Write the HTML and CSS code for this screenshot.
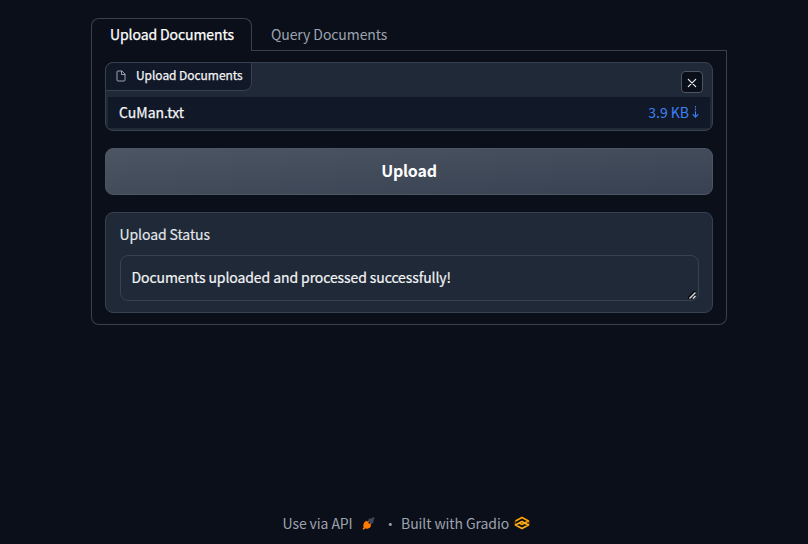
FILE: index.html
```html
<!DOCTYPE html>
<html lang="en">
<head>
<meta charset="utf-8">
<title>Upload Documents</title>
<link rel="stylesheet" href="styles.css">
</head>
<body>
<main class="app">
  <nav class="tabs">
    <button class="tab tab-active">Upload Documents</button>
    <button class="tab">Query Documents</button>
  </nav>
  <section class="panel">
    <div class="file-block">
      <div class="block-label">
        <svg class="file-icon" viewBox="0 0 24 24" fill="none" stroke="currentColor" stroke-width="2" stroke-linecap="round" stroke-linejoin="round"><path d="M13 2H6a2 2 0 0 0-2 2v16a2 2 0 0 0 2 2h12a2 2 0 0 0 2-2V9z"/><path d="M13 2v7h7"/></svg>
        <span>Upload Documents</span>
      </div>
      <button class="clear" aria-label="Clear"><svg viewBox="0 0 10 10" stroke="currentColor" stroke-width="1.15" stroke-linecap="round"><path d="M1.3 1.3l7.4 7.4M8.7 1.3l-7.4 7.4"/></svg></button>
      <div class="file-row">
        <span class="file-name">CuMan.txt</span>
        <a class="file-size">3.9 KB<svg class="down" viewBox="0 0 7 12" fill="none" stroke="currentColor"><path d="M3.5 0v1.6M3.5 2.6v1.6M3.5 5.2v5.8" stroke-width="1.1"/><path d="M.7 8.2l2.8 2.9 2.8-2.9" stroke-width="1.1"/></svg></a>
      </div>
    </div>
    <button class="upload">Upload</button>
    <div class="status">
      <label class="status-label" for="status">Upload Status</label>
      <div class="output" id="status">Documents uploaded and processed successfully!
        <svg class="grip" viewBox="0 0 8 8"><path d="M0 6L6 0h2v3L3 8H0z" fill="#05070b"/><path d="M1.5 7.5l6-6M5 7.5L7.5 5" stroke="#d5d5d5" stroke-width="1.5"/></svg>
      </div>
    </div>
  </section>
</main>
<footer class="footer">
  <span class="api">Use via API</span>
  <svg class="rocket" viewBox="0 0 14 14"><path d="M6.2 3.5L8.3 1.6l2.3-.3L12.4 0l1.4 1.2-1.3 1.7-.1 2.6-2.2 2.3z" fill="#3f4859"/><path d="M.5 13l1.2-1.6-.4-2.5L2.4 6l2.2-2 1.2.9.9-.6.8.8-.8 1 1.4 1.3 1-.8.8.8-.8.9.8.9-1.4 2.3-2.6 1.2-2.5-.2-1.6 1.2z" fill="#ff7c00"/></svg>
  <span class="dot">·</span>
  <span class="built">Built with Gradio</span>
  <svg class="gradio" viewBox="0 0 16 14" fill="none" stroke-linejoin="round"><path d="M1.5 4.9L8 1.4l6.5 3.5L8 8.4 5 6.8" stroke="#ffa000" stroke-width="1.7"/><path d="M11 7.2L8 5.6 1.5 9.1 8 12.6l6.5-3.5z" stroke="#ffb01a" stroke-width="1.7"/><path d="M1.2 5v4M14.8 5v4" stroke="#ff8c00" stroke-width=".6"/></svg>
</footer>
</body>
</html>
```
FILE: styles.css
```css
* { box-sizing: border-box; }
body {
  margin: 0;
  height: 544px;
  display: flex;
  flex-direction: column;
  justify-content: space-between;
  background: #0b0f19;
  color: #f3f4f6;
  font: 14px/20px "Noto Sans CJK SC", "Noto Sans", sans-serif;
  letter-spacing: -0.09px;
  overflow: hidden;
}
button { font: inherit; letter-spacing: inherit; color: inherit; padding: 0; margin: 0; }
svg { display: block; flex: none; }
.app { width: 636px; margin: 18px 0 0 91px; }
.tabs { display: flex; height: 33px; border-bottom: 1px solid #374151; }
.tab {
  height: 33px;
  padding: 0 18px 2px;
  border: 1px solid transparent;
  border-bottom: 0;
  background: none;
  color: #9ca3af;
  white-space: nowrap;
}
.tab-active {
  width: 161px;
  border-color: #374151;
  border-radius: 8px 8px 0 0;
  background: #0b0f19;
  color: #fff;
  text-align: left;
  -webkit-text-stroke: 0.25px;
}
.panel {
  height: 274px;
  padding: 11px 13px;
  border: 1px solid #374151;
  border-top: 0;
  border-radius: 0 0 8px 8px;
  display: flex;
  flex-direction: column;
  gap: 17px;
}
.file-block {
  position: relative;
  height: 69px;
  padding: 34px 2px 2px;
  border: 1px solid #374151;
  border-radius: 8px;
  background: #1f2937;
}
.block-label {
  position: absolute;
  top: -1px;
  left: -1px;
  width: 147px;
  height: 29px;
  padding: 0 0 2px 9px;
  display: flex;
  align-items: center;
  gap: 9px;
  border: 1px solid #374151;
  border-radius: 8px 0 8px 0;
  background: #111827;
  font-size: 12px;
  letter-spacing: -0.05px;
  -webkit-text-stroke: 0.25px;
  white-space: nowrap;
}
.block-label span { margin-top: -2px; }
.file-icon { width: 12px; height: 12px; color: #9ca3af; }
.clear {
  position: absolute;
  top: 8px;
  right: 9px;
  width: 22px;
  height: 22px;
  display: grid;
  place-items: center;
  border: 1px solid #4b5563;
  border-radius: 4px;
  background: #0b0f19;
}
.clear svg { width: 10px; height: 10px; margin: 1px 1px 0 0; }
.file-row {
  height: 31px;
  padding: 0 11px 1px;
  display: flex;
  align-items: center;
  justify-content: space-between;
  background: #111827;
}
.file-name { -webkit-text-stroke: 0.25px; letter-spacing: 0; }
.file-size { display: flex; align-items: center; gap: 3px; color: #3b82f6; letter-spacing: -0.03px; }
.down { width: 7px; height: 12px; }
.upload {
  height: 47px;
  flex: none;
  padding-bottom: 3px;
  border: 1px solid #4b5563;
  border-radius: 8px;
  background: linear-gradient(to bottom right, #4b5563, #374151);
  color: #fff;
  font-size: 16px;
  font-weight: 700;
  letter-spacing: -0.2px;
}
.status {
  height: 101px;
  padding: 11px 13px 11px 14px;
  border: 1px solid #374151;
  border-radius: 8px;
  background: #1f2937;
}
.status-label { display: block; height: 31px; margin-left: -0.5px; color: #e5e7eb; -webkit-text-stroke: 0.15px; }
.output {
  position: relative;
  height: 46px;
  padding: 11px 10.5px;
  border: 1px solid #374151;
  border-radius: 8px;
  -webkit-text-stroke: 0.2px;
}
.grip { position: absolute; right: 2px; bottom: 1px; width: 8px; height: 8px; }
.footer {
  display: flex;
  align-items: center;
  height: 20px;
  margin: 0 0 11px 282.5px;
  color: #9ca3af;
  white-space: nowrap;
}
.rocket { width: 13px; height: 13px; margin-left: 9px; }
.dot { margin-left: 8.5px; }
.built { margin-left: 4px; }
.gradio { width: 16px; height: 14px; margin: -1px 0 0 5px; }
```
